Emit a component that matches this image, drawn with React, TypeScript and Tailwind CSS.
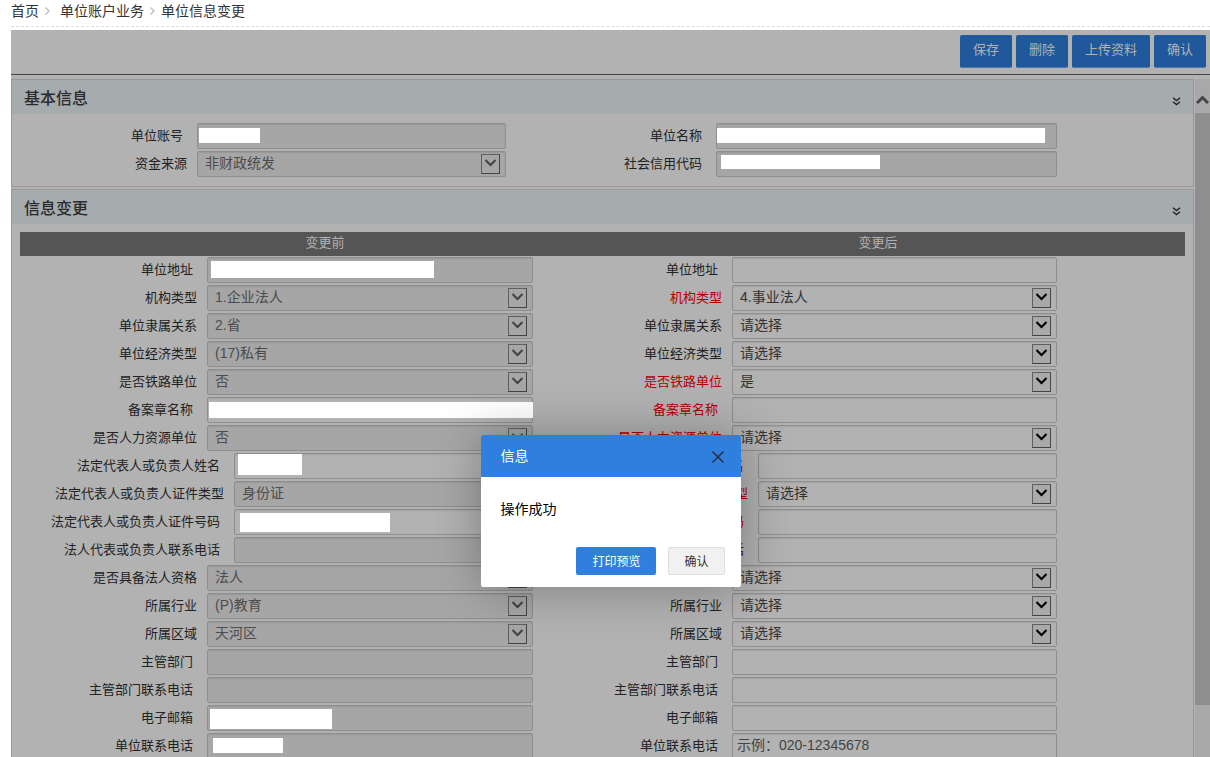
import { useId } from 'react';

interface FieldData {
  label: string;
  type: 'text' | 'select';
  value?: string;
  placeholder?: string;
  disabled?: boolean;
  required?: boolean;
  mask?: string; // position and size of the blanked-out value
}

interface RowData {
  before: FieldData;
  after: FieldData;
  wide?: boolean;
}

const PLEASE_SELECT = '请选择';

const basicRows: RowData[] = [
  {
    before: { label: '单位账号', type: 'text', disabled: true, mask: 'left-0.5 top-[5px] w-[61px] h-[15px]' },
    after: { label: '单位名称', type: 'text', disabled: true, mask: 'left-px top-[5px] w-[328px] h-[15px]' }
  },
  {
    before: { label: '资金来源', type: 'select', value: '非财政统发', disabled: true },
    after: { label: '社会信用代码', type: 'text', disabled: true, mask: 'left-[5px] top-1 w-[159px] h-[14px]' }
  }
];

const changeRows: RowData[] = [
  {
    before: { label: '单位地址', type: 'text', disabled: true, mask: 'left-1 top-1 w-[223px] h-[17px]' },
    after: { label: '单位地址', type: 'text' }
  },
  {
    before: { label: '机构类型', type: 'select', value: '1.企业法人', disabled: true },
    after: { label: '机构类型', type: 'select', value: '4.事业法人', required: true }
  },
  {
    before: { label: '单位隶属关系', type: 'select', value: '2.省', disabled: true },
    after: { label: '单位隶属关系', type: 'select', value: PLEASE_SELECT }
  },
  {
    before: { label: '单位经济类型', type: 'select', value: '(17)私有', disabled: true },
    after: { label: '单位经济类型', type: 'select', value: PLEASE_SELECT }
  },
  {
    before: { label: '是否铁路单位', type: 'select', value: '否', disabled: true },
    after: { label: '是否铁路单位', type: 'select', value: '是', required: true }
  },
  {
    before: { label: '备案章名称', type: 'text', mask: 'left-0.5 top-[5px] w-[324px] h-4' },
    after: { label: '备案章名称', type: 'text', required: true }
  },
  {
    before: { label: '是否人力资源单位', type: 'select', value: '否', disabled: true },
    after: { label: '是否人力资源单位', type: 'select', value: PLEASE_SELECT, required: true }
  },
  {
    wide: true,
    before: { label: '法定代表人或负责人姓名', type: 'text', mask: 'left-1 top-px w-[64px] h-[21px]' },
    after: { label: '法定代表人或负责人姓名', type: 'text', required: true }
  },
  {
    wide: true,
    before: { label: '法定代表人或负责人证件类型', type: 'select', value: '身份证', disabled: true },
    after: { label: '法定代表人或负责人证件类型', type: 'select', value: PLEASE_SELECT, required: true }
  },
  {
    wide: true,
    before: { label: '法定代表人或负责人证件号码', type: 'text', mask: 'left-1.5 top-1 w-[150px] h-[19px]' },
    after: { label: '法定代表人或负责人证件号码', type: 'text', required: true }
  },
  {
    wide: true,
    before: { label: '法人代表或负责人联系电话', type: 'text', disabled: true },
    after: { label: '法人代表或负责人联系电话', type: 'text' }
  },
  {
    before: { label: '是否具备法人资格', type: 'select', value: '法人', disabled: true },
    after: { label: '是否具备法人资格', type: 'select', value: PLEASE_SELECT }
  },
  {
    before: { label: '所属行业', type: 'select', value: '(P)教育', disabled: true },
    after: { label: '所属行业', type: 'select', value: PLEASE_SELECT }
  },
  {
    before: { label: '所属区域', type: 'select', value: '天河区', disabled: true },
    after: { label: '所属区域', type: 'select', value: PLEASE_SELECT }
  },
  {
    before: { label: '主管部门', type: 'text', disabled: true },
    after: { label: '主管部门', type: 'text' }
  },
  {
    before: { label: '主管部门联系电话', type: 'text', disabled: true },
    after: { label: '主管部门联系电话', type: 'text' }
  },
  {
    before: { label: '电子邮箱', type: 'text', disabled: true, mask: 'left-[3px] top-1 w-[122px] h-5' },
    after: { label: '电子邮箱', type: 'text' }
  },
  {
    before: { label: '单位联系电话', type: 'text', disabled: true, mask: 'left-1.5 top-[5px] w-[70px] h-[15px]' },
    after: { label: '单位联系电话', type: 'text', placeholder: '示例：020-12345678' }
  }
];

function Field({ field }: { field: FieldData }) {
  const id = useId();
  const boxClass = `block w-full h-[26px] pb-0.5 rounded-xs border border-[#8e8e8e] shadow-[inset_0_1px_1px_rgba(0,0,0,0.08)] text-sm leading-5 outline-none appearance-none disabled:opacity-100 ${
    field.disabled ? 'bg-[#a6a6a6] text-[#4c4c4c]' : 'bg-[#b2b2b2] text-[#333333]'
  }`;

  return (
    <>
      <label
        htmlFor={id}
        className={`block text-right whitespace-nowrap text-[13px] leading-[26px] ${
          field.type === 'select' ? 'pr-2.5' : 'pr-3.5'
        } ${field.required ? 'text-[#b20000]' : 'text-[#222222]'}`}
      >
        {field.label}
      </label>
      <div className="relative min-w-0">
        {field.type === 'select' ? (
          <>
            <select id={id} defaultValue={field.value} disabled={field.disabled} className={`${boxClass} pl-[7px] pr-7`}>
              <option>{field.value}</option>
            </select>
            <span
              className={`pointer-events-none absolute right-1.5 top-[3px] flex w-[19px] h-5 items-center justify-center pb-0.5 border border-t-[#5f5f5f] border-l-[#5f5f5f] border-r-[#444444] border-b-[#444444] ${
                field.disabled ? 'text-[#444444]' : 'bg-[#a9a9a9] text-black'
              }`}
            >
              <svg width="11" height="8" viewBox="0 0 11 8" fill="none" stroke="currentColor" strokeWidth="2">
                <path d="M0.5 1L5.5 6L10.5 1" />
              </svg>
            </span>
          </>
        ) : (
          <input
            id={id}
            type="text"
            disabled={field.disabled}
            placeholder={field.placeholder}
            className={`${boxClass} px-1 placeholder:text-[#444444]`}
          />
        )}
        {field.mask && <span className={`absolute bg-white ${field.mask}`} />}
      </div>
    </>
  );
}

function FormRow({ row, columns }: { row: RowData; columns: string }) {
  return (
    <div className={`grid ${columns}`}>
      <Field field={row.before} />
      <Field field={row.after} />
    </div>
  );
}

function Panel({ title, children }: { title: string; children: React.ReactNode }) {
  return (
    <section className="border border-[#989898]">
      <header className="flex items-center justify-between h-[34px] px-3 bg-[#a6abae]">
        <h2 className="pt-1 text-base font-medium text-[#2b2b2b]">{title}</h2>
        <button type="button" aria-label={title} className="pt-2 text-[#222222]">
          <svg width="9" height="9" viewBox="0 0 9 9" fill="none" stroke="currentColor" strokeWidth="1.4">
            <path d="M1 0.8L4.5 3.6L8 0.8M1 4.8L4.5 7.6L8 4.8" />
          </svg>
        </button>
      </header>
      {children}
    </section>
  );
}

function Dialog() {
  return (
    <div
      role="dialog"
      aria-labelledby="dialog-title"
      className="w-[260px] rounded-xs bg-white shadow-[1px_1px_50px_rgba(0,0,0,0.3)]"
    >
      <div className="flex items-center justify-between h-[42px] pl-5 pr-4 rounded-t-xs bg-[#2e7fde]">
        <h3 id="dialog-title" className="text-sm text-white">信息</h3>
        <button type="button" aria-label="关闭" className="pt-0.5 text-[#2d2c3b]">
          <svg width="14" height="14" viewBox="0 0 14 14" fill="none" stroke="currentColor" strokeWidth="1.5">
            <path d="M1.5 1.5L12.5 12.5M12.5 1.5L1.5 12.5" />
          </svg>
        </button>
      </div>
      <p className="px-5 pt-5 pb-[26px] text-sm leading-6 text-black">操作成功</p>
      <div className="flex justify-end gap-3 px-4 pb-3">
        <button type="button" className="h-7 px-4 pt-0.5 rounded-xs bg-[#2e7fde] text-xs text-white">
          打印预览
        </button>
        <button type="button" className="h-7 px-[15px] pt-0.5 rounded-xs border border-[#dedede] bg-[#f1f1f1] text-xs text-[#333333]">
          确认
        </button>
      </div>
    </div>
  );
}

function Separator() {
  return (
    <svg className="mx-[5px]" width="7" height="8" viewBox="0 0 7 8" fill="none" stroke="#bbbbbb" strokeWidth="1.3">
      <path d="M1.5 0.5L5 4L1.5 7.5" />
    </svg>
  );
}

export default function App() {
  return (
    <div className="flex flex-col h-screen overflow-hidden pl-[11px] bg-white font-['Liberation_Sans','Noto_Sans_CJK_SC',sans-serif]">
      <nav className="flex items-center shrink-0 h-[27px] pb-1 border-b border-dashed border-[#dddddd] text-sm text-[#333333]">
        <a href="#">首页</a>
        <Separator />
        <a href="#" className="ml-1">单位账户业务</a>
        <Separator />
        <a href="#">单位信息变更</a>
      </nav>

      <main className="relative flex flex-col flex-1 min-h-0 mt-[3px] bg-[#b2b2b2]">
        <div className="flex shrink-0 items-start justify-end gap-1 h-[45px] pt-[5px] pr-1 border-b border-[#444444]">
          {['保存', '删除', '上传资料', '确认'].map(name => (
            <button
              key={name}
              type="button"
              className="h-[33px] px-3 pb-1 rounded-xs border border-[#225a9e] border-b-[#4a78ad] bg-[#20599b] text-[13px] text-[#b2b2b2]"
            >
              {name}
            </button>
          ))}
        </div>

        <div className="flex flex-1 min-h-0 pt-1 gap-px">
          <div className="flex-1 min-w-0 overflow-hidden space-y-0.5">
            <Panel title="基本信息">
              <div className="px-2 py-[9px] space-y-0.5">
                {basicRows.map(row => (
                  <FormRow key={row.before.label} row={row} columns="grid-cols-[177fr_309fr_210fr_341fr_128fr]" />
                ))}
              </div>
            </Panel>

            <Panel title="信息变更">
              <div className="p-2">
                <div className="grid grid-cols-[610fr_496fr_59fr] h-6 mb-px bg-[#555555] text-center text-[13px] leading-[22px] text-[#b2b2b2]">
                  <span>变更前</span>
                  <span>变更后</span>
                </div>
                <div className="space-y-0.5">
                  {changeRows.map(row => (
                    <FormRow
                      key={row.before.label}
                      row={row}
                      columns={
                        row.wide
                          ? 'grid-cols-[214fr_299fr_225fr_299fr_128fr]'
                          : 'grid-cols-[187fr_326fr_199fr_325fr_128fr]'
                      }
                    />
                  ))}
                </div>
              </div>
            </Panel>
          </div>

          <div className="flex flex-col w-[15px] bg-[#a8a8a8]">
            <div className="flex shrink-0 items-center justify-center h-[34px] pt-2 text-[#444444]">
              <svg width="13" height="10" viewBox="0 0 13 10" fill="none" stroke="currentColor" strokeWidth="3">
                <path d="M1 8L6.5 2.5L12 8" />
              </svg>
            </div>
            <div className="flex-[592] bg-[#8e8e8e]" />
            <div className="flex-[52]" />
          </div>
        </div>

        <div className="absolute inset-x-0 top-[405px] flex justify-center">
          <Dialog />
        </div>
      </main>
    </div>
  );
}
